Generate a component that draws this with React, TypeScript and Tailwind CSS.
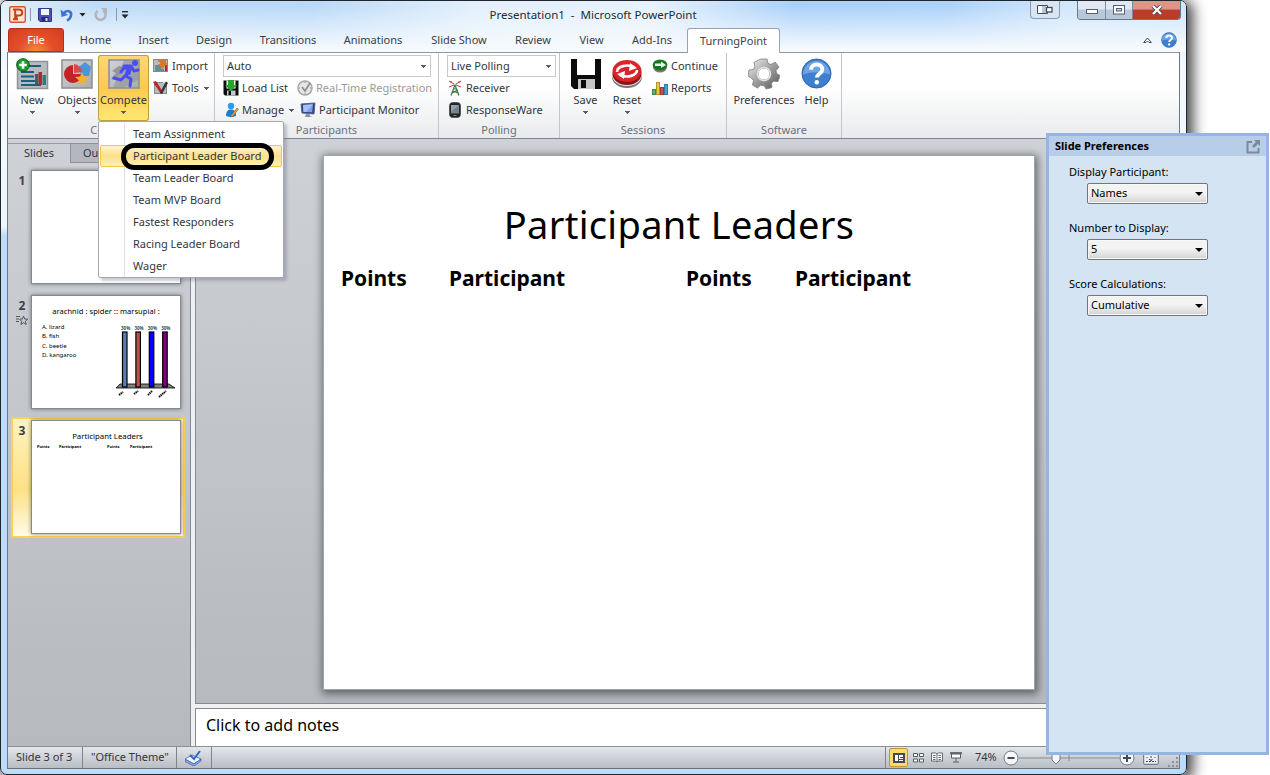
import React, { ReactNode } from "react";

type Box = { children?: ReactNode; className?: string };

function Caret({ className = "" }: { className?: string }) {
  return (
    <svg width="5" height="3" viewBox="0 0 5 3" className={className} shapeRendering="crispEdges">
      <path d="M0 0h5v1H4v1H3v1H2V2H1V1H0z" fill="#5a5e66" />
    </svg>
  );
}

function Panel32({ children }: Box) {
  return (
    <svg width="32" height="30" viewBox="0 0 32 30">
      <defs>
        <linearGradient id="plate" x1="0" y1="0" x2="1" y2="1">
          <stop offset="0" stopColor="#d0d2d4" />
          <stop offset="1" stopColor="#a9acae" />
        </linearGradient>
      </defs>
      <rect x="1" y="1" width="30" height="28" fill="url(#plate)" stroke="#8f9395" strokeWidth="1.6" />
      {children}
    </svg>
  );
}

function NewIcon() {
  return (
    <svg width="34" height="34" viewBox="0 0 34 34">
      <rect x="2.5" y="4.500" width="30" height="27" fill="#b9bcbe" stroke="#8f9395" strokeWidth="1.5" />
      <path d="M14 9h12M6 15h13M6 19.500h13M6 24h15M6 28h20" stroke="#17607f" strokeWidth="1.8" />
      <rect x="20" y="17" width="3.500" height="10" fill="#4b5f63" />
      <rect x="23.500" y="15" width="3.500" height="13" fill="#b3292b" />
      <rect x="27.500" y="18" width="3.500" height="10" fill="#2b7c86" />
      <circle cx="8" cy="8" r="6.300" fill="#1b9a2c" stroke="#0a5d18" />
      <path d="M8 4.200v7.600M4.200 8h7.600" stroke="#fff" strokeWidth="2.600" />
    </svg>
  );
}

function ObjectsIcon() {
  return (
    <Panel32>
      <path d="M18 8l6-5 6 5-2 9H20z" fill="#4f94d4" />
      <path d="M12 6a9 9 0 1 0 9 9h-9z" fill="#c32227" />
      <path d="M13 5a9 9 0 0 1 8 8l-8 1z" fill="#d9484a" />
      <path d="M21 13l2 4.500 5 .4-3.800 3.300 1.200 4.800-4.400-2.500-4.400 2.500 1.200-4.800L14 17.900l5-.4z" fill="#f2b22d" />
    </Panel32>
  );
}

function RunnerIcon() {
  return (
    <Panel32>
      <path d="M16 1h14v20L14 29H5z" fill="#8c8e93" opacity=".55" />
      <path d="M4 12l7-5 5 1-4 7-6 6-3-1 5-6z" fill="#808288" opacity=".7" />
      <circle cx="27" cy="4" r="3" fill="#4a4df5" />
      <path d="M16 7l7 0 3 5 4-1M22 8l-4 9 5 3-1 7M18 16l-5 5-7-2M22 9l-6 0-3 4" fill="none" stroke="#4a4df5" strokeWidth="3" strokeLinejoin="round" strokeLinecap="round" />
      <path d="M19 7h6l-3 9-5-1z" fill="#4a4df5" />
    </Panel32>
  );
}

function ImportIcon() {
  return (
    <svg width="16" height="16" viewBox="0 0 16 16">
      <rect x=".5" y="1.500" width="14" height="12" fill="#b8bbbd" stroke="#85898b" />
      <path d="M2 8h6M2 10h6M2 12h9" stroke="#17607f" />
      <path d="M13 7v6" stroke="#b3292b" strokeWidth="2" />
      <path d="M5 1h8v4h2l-6 6-4-5h2V4H5z" fill="#d47a28" />
    </svg>
  );
}

function ToolsIcon() {
  return (
    <svg width="16" height="16" viewBox="0 0 16 16">
      <rect x="1.500" y="2.500" width="12" height="11" fill="#b7babc" stroke="#85898b" />
      <path d="M0 2l3-1 7 11-2 2z" fill="#b9252b" />
      <path d="M13 1l2 2-6 11-2-1z" fill="#33373b" />
      <path d="M10 3l4-2" stroke="#e8eaec" />
    </svg>
  );
}

function Floppy({ size, green = false }: { size: number; green?: boolean }) {
  return (
    <svg width={size} height={size} viewBox="0 0 32 32">
      <path d="M1 1h30v30H4l-3-3z" fill="#0b0b0b" />
      <rect x="7" y="1" width="18" height="16" fill="#fff" />
      <rect x="8" y="21" width="17" height="10" fill="#c4c6c8" />
      <rect x="11" y="22" width="5" height="8" fill="#0b0b0b" />
      {green && <path d="M10 0h12v10h6L16 22 4 10h6z" fill="#25a52f" />}
    </svg>
  );
}

function ClockIcon() {
  return (
    <svg width="16" height="16" viewBox="0 0 16 16">
      <circle cx="8" cy="8" r="7" fill="#e6e6e6" stroke="#a6a6a6" strokeWidth="1.500" />
      <path d="M5 7l3 4 5-8" fill="none" stroke="#8d8d8d" strokeWidth="1.700" />
      <path d="M8 2v1M8 13v1M2 8h1M13 8h1" stroke="#8d8d8d" />
    </svg>
  );
}

function ManageIcon() {
  return (
    <svg width="14" height="16" viewBox="0 0 14 16">
      <circle cx="6" cy="4" r="3.200" fill="#2a9df0" />
      <path d="M1 14c0-5 2-6.500 5-6.500s5 1.500 5 6.500c-3 1.300-7 1.300-10 0z" fill="#1b7fd0" />
      <path d="M6 13.500L12 6l1.500 1.200-6 7.300-2 .5z" fill="#f0a13a" stroke="#7c4a12" strokeWidth=".5" />
    </svg>
  );
}

function MonitorIcon() {
  return (
    <svg width="16" height="16" viewBox="0 0 16 16">
      <path d="M1 2l14-1-1 11-12-1z" fill="#2a3e8e" stroke="#5c6478" />
      <path d="M3 3l10-.7-.8 8L3.500 10z" fill="#7f9df0" />
      <path d="M3 3l10-.7L6 10H3.500z" fill="#a8bff8" />
      <path d="M6 12l4 .5v1.500l2 1H5z" fill="#8a8f9a" />
    </svg>
  );
}

function ReceiverIcon() {
  return (
    <svg width="16" height="16" viewBox="0 0 16 16">
      <path d="M4 15.500L8 5l4 10.500M5 13l6-3M11 13L5.500 11M6.500 9l3 0" stroke="#3f7a47" strokeWidth="1.200" fill="none" />
      <path d="M7 4L2 1M7 5L2 7M9 4l5-3M9 5l5 2M4 1v2M12 1v2" stroke="#c23a3a" strokeWidth="1" />
    </svg>
  );
}

function PhoneIcon() {
  return (
    <svg width="12" height="16" viewBox="0 0 12 16">
      <rect x=".7" y=".7" width="10.600" height="14.600" rx="2.600" fill="#1f2123" stroke="#3d4042" />
      <rect x="2" y="3" width="8" height="8.500" fill="#76828e" />
      <path d="M2 3h8L2 10z" fill="#93a0ac" />
      <rect x="4.500" y="13" width="3" height="1" fill="#8a8f93" />
    </svg>
  );
}

function ResetIcon() {
  return (
    <svg width="32" height="30" viewBox="0 0 32 30">
      <ellipse cx="16" cy="18" rx="15" ry="11" fill="#73767a" />
      <ellipse cx="16" cy="16" rx="15" ry="11" fill="#e3e5e6" />
      <ellipse cx="16" cy="15" rx="14.500" ry="11" fill="#8d1216" />
      <ellipse cx="16" cy="12" rx="14.500" ry="11" fill="#d9252a" />
      <path d="M6 13c0-6 10-8 17-5M26 11c0 6-10 8-17 5" fill="none" stroke="#fff" strokeWidth="2.600" />
      <path d="M19 4l7 5-8 3zM13 20l-7-5 8-3z" fill="#fff" />
    </svg>
  );
}

function ContinueIcon() {
  return (
    <svg width="16" height="14" viewBox="0 0 16 14">
      <ellipse cx="8" cy="8" rx="7" ry="5.500" fill="#777b7e" />
      <ellipse cx="8" cy="6" rx="7.300" ry="5.500" fill="#17761f" />
      <path d="M3 4.500h6V2.500l5 3.500-5 3V7H3z" fill="#e4f4e4" />
    </svg>
  );
}

function ReportsIcon() {
  return (
    <svg width="16" height="14" viewBox="0 0 16 14">
      <rect x=".5" y="8.500" width="3" height="5" fill="#5fae6b" stroke="#3d8a4b" />
      <rect x="4.500" y="1.500" width="3" height="12" fill="#e8c93c" stroke="#b69721" />
      <rect x="8.500" y="6.500" width="3" height="7" fill="#d4504e" stroke="#a83330" />
      <rect x="12.500" y="3.500" width="3" height="10" fill="#4ba3cc" stroke="#2f7fa6" />
    </svg>
  );
}

function GearIcon() {
  return (
    <svg width="32" height="32" viewBox="0 0 32 32">
      <defs>
        <linearGradient id="gear" x1="0" y1="0" x2="1" y2="1">
          <stop offset="0" stopColor="#f2f2f2" />
          <stop offset=".5" stopColor="#a0a0a0" />
          <stop offset="1" stopColor="#555" />
        </linearGradient>
      </defs>
      <path
        fillRule="evenodd"
        d="M13 1h6l1 4.300 3 1.300L27 4l4 5-3 3.500.7 3 3.300 2-2 6-4.500-.3-2 2 .5 4.300-6 1.500-2-3.500-3.500-.2L9.500 30 4.500 27l1-4.500-2-2.500L0 18l1-6 4.300-.5 1.500-3L6 4.500 10.500 2zM16 10a6 6 0 1 0 .01 12A6 6 0 0 0 16 10z"
        fill="url(#gear)"
        stroke="#7d7d7d"
        strokeWidth=".8"
      />
      <circle cx="16" cy="16" r="6.500" fill="none" stroke="#e4e4e4" strokeWidth="1.500" />
    </svg>
  );
}

function HelpIcon({ size }: { size: number }) {
  return (
    <svg width={size} height={size} viewBox="0 0 32 32">
      <circle cx="16" cy="16" r="15" fill="#3f7fcf" stroke="#2f62a8" strokeWidth="1" />
      <path d="M2 17a14 14 0 0 1 28 0c-9-3-19-3-28 0z" fill="#6fa4e3" />
      <path d="M10.500 12c0-7 11.500-7 11.500 0 0 4-5.500 4-5.500 8" fill="none" stroke="#fff" strokeWidth="4" />
      <circle cx="16.300" cy="25" r="2.300" fill="#fff" />
    </svg>
  );
}

function BigButton({ icon, label, caret, className }: { icon: ReactNode; label: string; caret?: boolean; className: string }) {
  return (
    <div className={"flex h-[66px] shrink-0 flex-col items-center " + className}>
      <div className="flex h-[37px] items-center justify-center">{icon}</div>
      <div className="h-[16px] whitespace-nowrap leading-[16px]">{label}</div>
      {caret && <Caret className="mt-[3px]" />}
    </div>
  );
}

function SmallRow({ icon, children, className = "" }: { icon: ReactNode; children: ReactNode; className?: string }) {
  return (
    <div className={"flex h-[22px] shrink-0 items-center whitespace-nowrap " + className}>
      <div className="flex w-[19px] shrink-0 items-center">{icon}</div>
      {children}
    </div>
  );
}

function Group({ title, className, children }: { title: string; className: string; children: ReactNode }) {
  return (
    <div className={"flex h-full shrink-0 flex-col border-r border-[#c3c6ca] pt-[2px] " + className}>
      <div className="flex h-[67px]">{children}</div>
      <div className="flex h-[16px] items-center justify-center text-[#6a7080]">{title}</div>
    </div>
  );
}

function Combo({ label, className }: { label: string; className: string }) {
  return (
    <div className={"flex h-[22px] shrink-0 items-center justify-between border border-[#c6c9cd] bg-white pr-1 pl-[3px] " + className}>
      {label}
      <Caret />
    </div>
  );
}

const tabs: [string, string][] = [
  ["Home", "w-[63px]"],
  ["Insert", "w-[53px]"],
  ["Design", "w-[68px]"],
  ["Transitions", "w-[80px]"],
  ["Animations", "w-[90px]"],
  ["Slide Show", "w-[82px]"],
  ["Review", "w-[66px]"],
  ["View", "w-[51px]"],
  ["Add-Ins", "w-[70px]"],
];

function TitleBar() {
  return (
    <div className="flex h-[27px] shrink-0 items-start">
      <div className="flex h-[27px] w-[320px] items-center pl-[8px]">
        <svg width="17" height="17" viewBox="0 0 17 17">
          <rect x=".7" y=".7" width="15.600" height="15.600" rx="1.500" fill="#fbe3d6" stroke="#d4552b" strokeWidth="1.400" />
          <path d="M5 3.500h4.500c5 0 5 6 0 6H7.500V13M4 13.200h5M4 3.500h3M6.200 4v9" fill="none" stroke="#c8401b" strokeWidth="2" />
        </svg>
        <div className="ml-[4px] h-[13px] w-px bg-[#8d99a8]" />
        <svg width="14" height="14" viewBox="0 0 14 14" className="ml-[7px]">
          <path d="M.5.5h13v13H2l-1.500-1.500z" fill="#4a4fb0" stroke="#34388c" />
          <rect x="3" y="1" width="8" height="6" fill="#eef4fd" />
          <rect x="3.500" y="9" width="7" height="4.500" fill="#25286b" />
          <rect x="7.500" y="10" width="2" height="3" fill="#d6dcf4" />
        </svg>
        <svg width="14" height="14" viewBox="0 0 14 14" className="ml-[8px]">
          <path d="M3 6C7 1 12 3 11 7.500c-.4 2.500-2 4-4 5" fill="none" stroke="#3f74cc" strokeWidth="2.600" />
          <path d="M.5 1.500l1 7.500 6.500-2z" fill="#3f74cc" />
        </svg>
        <svg width="7" height="4" viewBox="0 0 7 4" className="ml-[5px]"><path d="M.5 0h6L3.500 3.500z" fill="#222" /></svg>
        <svg width="14" height="14" viewBox="0 0 14 14" className="ml-[8px]">
          <path d="M9 2.500A5 5 0 1 1 3.500 3" fill="none" stroke="#b2b6bc" strokeWidth="2.600" />
          <path d="M7 0h6v6.500z" fill="#b2b6bc" />
        </svg>
        <div className="ml-[8px] h-[13px] w-px bg-[#8d99a8]" />
        <svg width="8" height="8" viewBox="0 0 8 8" className="ml-[4px]"><path d="M1 .7h6" stroke="#222" strokeWidth="1.300" /><path d="M.5 3.500h7L4 7.500z" fill="#222" /></svg>
      </div>
      <div className="flex h-[27px] w-[544px] items-center justify-center text-[11.500px] text-[#222b36]">
        <span className="whitespace-pre">Presentation1  -  Microsoft PowerPoint</span>
      </div>
      <div className="ml-[165px] flex h-[18px] w-[30px] items-center justify-center rounded-b-[4px] border border-t-0 border-[#8b9cb1] bg-[#d7e5f5]">
        <svg width="16" height="9" viewBox="0 0 16 9">
          <path d="M.5.5h10v8H.5z" fill="#fff" stroke="#444c58" />
          <path d="M6 1v7M8 1v7" stroke="#6f8fb8" />
          <rect x="9.500" y="2.500" width="5.500" height="4.500" fill="#fff" stroke="#444c58" strokeWidth="1.300" />
        </svg>
      </div>
      <div className="ml-[17px] flex h-[19px] w-[104px] overflow-hidden rounded-b-[4px] border border-t-0 border-[#6b7685]">
        <div className="flex w-[28px] items-center justify-center border-r border-[#7f8c9d] bg-linear-to-b from-[#dfe8f3] from-45% to-[#b8c7da] to-50%">
          <svg width="12" height="6" viewBox="0 0 12 6" className="mt-[4px]"><rect x=".5" y=".5" width="11" height="4" fill="#fff" stroke="#555e6b" /></svg>
        </div>
        <div className="flex w-[27px] items-center justify-center border-r border-[#7f8c9d] bg-linear-to-b from-[#dfe8f3] from-45% to-[#b8c7da] to-50%">
          <svg width="12" height="10" viewBox="0 0 12 10"><rect x=".5" y=".5" width="11" height="8.500" fill="#fff" stroke="#555e6b" /><rect x="3.500" y="3.500" width="5" height="2.500" fill="#c9d4e2" stroke="#555e6b" /></svg>
        </div>
        <div className="flex flex-1 items-center justify-center bg-linear-to-b from-[#dd9588] from-45% to-[#bb3c28] to-50%">
          <svg width="12" height="10" viewBox="0 0 12 10"><path d="M2 1l8 8M10 1L2 9" stroke="#4f4548" strokeWidth="4" /><path d="M2 1l8 8M10 1L2 9" stroke="#fff" strokeWidth="2.300" /></svg>
        </div>
      </div>
    </div>
  );
}

function TabRow() {
  return (
    <div className="flex h-[24px] shrink-0 pl-[7px] text-[#3b3e44]">
      <div className="flex w-[56px] items-center justify-center rounded-t-[3px] border border-[#b1301a] bg-[radial-gradient(ellipse_at_50%_100%,#f68a35_0%,#e4502a_45%,#d63a1c_100%)] text-white">File</div>
      {tabs.map(([t, w]) => (
        <div key={t} className={"flex shrink-0 items-center justify-center " + w}>{t}</div>
      ))}
      <div className="z-10 -mb-px flex w-[93px] items-center justify-center rounded-t-[3px] border border-b-0 border-[#9ba3ad] bg-white">TurningPoint</div>
      <div className="flex flex-1 items-center justify-end pr-[9px]">
        <svg width="9" height="7" viewBox="0 0 9 7" className="mr-[9px]"><path d="M.7 5.500L4.500 1l3.800 4.500H6L4.500 4 3 5.500z" fill="#fff" stroke="#3f4650" /></svg>
        <HelpIcon size={16} />
      </div>
    </div>
  );
}

function Ribbon() {
  return (
    <div className="flex h-[87px] shrink-0 border-t border-b border-t-[#8f979f] border-b-[#80868f] bg-linear-to-b from-white from-40% to-[#e8eaed] text-[#33353b]">
      <Group title="Content" className="w-[207px]">
        <BigButton icon={<NewIcon />} label="New" caret className="w-[48px]" />
        <BigButton icon={<ObjectsIcon />} label="Objects" caret className="w-[42px]" />
        <BigButton icon={<RunnerIcon />} label="Compete" caret className="w-[51px] rounded-[3px] bg-linear-to-b from-[#fcd77a] via-[#fcc94e] to-[#ffe873] shadow-[inset_0_0_0_1px_#c29c41]" />
        <div className="flex flex-col pl-[4px]">
          <SmallRow icon={<ImportIcon />}>Import</SmallRow>
          <SmallRow icon={<ToolsIcon />}>Tools<Caret className="ml-[5px]" /></SmallRow>
        </div>
      </Group>
      <Group title="Participants" className="w-[224px]">
        <div className="flex flex-col pl-[8px]">
          <Combo label="Auto" className="w-[208px]" />
          <div className="flex">
            <SmallRow className="w-[74px]" icon={<Floppy size={16} green />}>Load List</SmallRow>
            <SmallRow className="text-[#9a9a9a]" icon={<ClockIcon />}>Real-Time Registration</SmallRow>
          </div>
          <div className="flex">
            <SmallRow className="w-[77px] pl-[2px] [&>div]:w-[17px]" icon={<ManageIcon />}>Manage<Caret className="ml-[5px]" /></SmallRow>
            <SmallRow icon={<MonitorIcon />}>Participant Monitor</SmallRow>
          </div>
        </div>
      </Group>
      <Group title="Polling" className="w-[121px]">
        <div className="flex flex-col pl-[8px]">
          <Combo label="Live Polling" className="w-[109px]" />
          <SmallRow icon={<ReceiverIcon />}>Receiver</SmallRow>
          <SmallRow className="pl-[2px] [&>div]:w-[17px]" icon={<PhoneIcon />}>ResponseWare</SmallRow>
        </div>
      </Group>
      <Group title="Sessions" className="w-[167px]">
        <BigButton icon={<Floppy size={32} />} label="Save" caret className="ml-[4px] w-[43px]" />
        <BigButton icon={<ResetIcon />} label="Reset" caret className="w-[40px]" />
        <div className="flex flex-col pl-[5px]">
          <SmallRow icon={<ContinueIcon />}>Continue</SmallRow>
          <SmallRow icon={<ReportsIcon />}>Reports</SmallRow>
        </div>
      </Group>
      <Group title="Software" className="w-[115px]">
        <BigButton icon={<GearIcon />} label="Preferences" className="ml-[4px] w-[66px]" />
        <BigButton icon={<HelpIcon size={31} />} label="Help" className="w-[39px]" />
      </Group>
    </div>
  );
}

const bars = ["#4f81bd", "#c0504d", "#0000ff", "#800080"];

function PollSlide() {
  return (
    <div className="flex h-full flex-col text-[7.500px] leading-none text-black">
      <div className="mt-[12px] text-center tracking-[0.05px]">arachnid : spider :: marsupial :</div>
      <div className="flex">
        <div className="flex w-[84px] flex-col gap-[3.600px] pt-[8px] pl-[10px] text-[6px]">
          <span>A. lizard</span><span>B. fish</span><span>C. beetle</span><span>D. kangaroo</span>
        </div>
        <svg width="62" height="76" viewBox="0 0 62 76" className="mt-[8px]">
          <path d="M4 60h49l6 4H0z" fill="#808080" stroke="#000" strokeWidth=".8" />
          {bars.map((c, i) => (
            <g key={c}>
              <text x={5 + i * 13.400} y="6" fontSize="4.500" fontWeight="700" fill="#28505c">30%</text>
              <rect x={6.500 + i * 13.400} y="8" width="4.500" height="55" fill={c} stroke="#000" strokeWidth="1.200" />
            </g>
          ))}
          <path d="M3 71l4-3M18 70l4-3M32 71l4-4M43 73l7-6" stroke="#111" strokeWidth="2" strokeDasharray="1.500 .6" />
        </svg>
      </div>
    </div>
  );
}

function LeaderSlide() {
  return (
    <div className="flex h-full flex-col leading-none text-black">
      <div className="mt-[12px] pl-[3px] text-center text-[7.800px]">Participant Leaders</div>
      <div className="mt-[4px] flex pl-[5px] text-[4px] font-bold">
        <span className="w-[22px]">Points</span><span className="w-[48px]">Participant</span><span className="w-[23px]">Points</span><span>Participant</span>
      </div>
    </div>
  );
}

function Thumb({ n, children, selected, star }: { n: number; children?: ReactNode; selected?: boolean; star?: boolean }) {
  return (
    <div className={"ml-[3px] flex h-[121px] w-[174px] shrink-0 rounded-[2px] border-2 pt-px " + (selected ? "border-[#f8d254] bg-[linear-gradient(180deg,#fef3c0_0%,#fde184_60%,#fffbe6_100%)]" : "border-transparent")}>
      <div className="flex w-[18px] flex-col items-center pt-[4px] text-[12px] leading-[14px] font-bold text-[#3d4048]">
        {n}
        {star && (
          <svg width="12" height="11" viewBox="0 0 12 11" className="mt-[2px]"><path d="M7.500 1l1.200 3 3 .2-2.300 2 .8 3.300-2.700-1.800-2.600 1.800.8-3.200-2-2.100 2.700-.2zM0 1.500h4M0 4h3M0 6.500h3" fill="none" stroke="#444850" strokeWidth=".9" /></svg>
        )}
      </div>
      <div className="h-[114px] w-[150px] overflow-hidden border border-[#858a92] bg-white shadow-[0_0_4px_#0007]">{children}</div>
    </div>
  );
}

function SlidePane() {
  return (
    <div className="flex w-[183px] shrink-0 flex-col border-r border-[#858b94] bg-linear-to-b from-[#ced2d7] to-[#b6babf]">
      <div className="flex h-[24px] pt-[4px] text-[#33363c]">
        <div className="flex w-[62px] items-center justify-center border-t border-[#989da5]">Slides</div>
        <div className="flex flex-1 items-center border border-[#8c9199] bg-[#b4b8be] pl-[12px]">Outline</div>
      </div>
      <div className="flex flex-col gap-[4px] pt-[4px]">
        <Thumb n={1} />
        <Thumb n={2} star><PollSlide /></Thumb>
        <Thumb n={3} selected><LeaderSlide /></Thumb>
      </div>
    </div>
  );
}

function Editor() {
  return (
    <div className="flex min-w-0 flex-1 flex-col border-l-4 border-[#eef0f2]">
      <div className="flex h-[565px] border-b border-l border-[#858b94] bg-linear-to-b from-[#ced2d7] to-[#b6babf] pt-[16px] pl-[127px]">
        <div className="flex h-[535px] w-[712px] flex-col border border-[#a0a5ac] bg-white text-black shadow-[1px_2px_8px_2px_#0007]">
          <div className="mt-[43px] flex h-[50px] items-center justify-center text-[38px] leading-none tracking-[0.3px]">
            <span className="whitespace-nowrap">Participant Leaders</span>
          </div>
          <div className="mt-[16px] flex pl-[17px] text-[21px] leading-[26px] font-bold">
            <span className="w-[108px]">Points</span><span className="w-[237px]">Participant</span><span className="w-[109px]">Points</span><span>Participant</span>
          </div>
        </div>
      </div>
      <div className="h-[4px] bg-[#eef0f2]" />
      <div className="flex flex-1 items-start border-t border-l border-[#858b94] bg-white pt-[4px] pl-[10px] text-[16px] leading-[24px] text-black">Click to add notes</div>
    </div>
  );
}

function StatusBar() {
  return (
    <div className="flex h-[23px] shrink-0 items-center border-t border-b border-t-[#8b9097] border-b-[#6d737c] bg-linear-to-b from-[#e3e6ea] to-[#b9bdc4] text-[#33363c]">
      <div className="flex h-full w-[75px] items-center border-r border-[#7f848c] pl-[8px]">Slide 3 of 3</div>
      <div className="flex h-full w-[94px] items-center border-r border-[#7f848c] pl-[8px]">"Office Theme"</div>
      <div className="flex h-full w-[35px] items-center border-r border-[#7f848c] pl-[8px]">
        <svg width="17" height="16" viewBox="0 0 17 16">
          <path d="M0 9l7-4 9 4-7 5z" fill="#eef3fb" stroke="#5b7fc7" />
          <path d="M0 9.500v2l9 4.500 7-5V9l-7 5z" fill="#96b2e4" stroke="#3f63b0" strokeWidth=".8" />
          <path d="M5 5l4 4 6-8" fill="none" stroke="#3568c4" strokeWidth="2" />
        </svg>
      </div>
      <div className="flex h-full flex-1 items-center border-l border-[#7f848c] pl-[3px] ml-[673px]">
        <div className="flex h-[19px] w-[19px] items-center justify-center rounded-[2px] border border-[#c2953c] bg-[#fddb6b]">
          <svg width="12" height="10" viewBox="0 0 12 10" shapeRendering="crispEdges"><path d="M1 1h10v8H1z" fill="#fff" stroke="#444a55" strokeWidth="1.500" /><path d="M5 1v8M5 6h6M7 4h3" stroke="#444a55" /></svg>
        </div>
        <svg width="11" height="10" viewBox="0 0 11 10" className="ml-[5px]"><path d="M.5.500h4v3h-4zM6.500.5h4v3h-4zM.5 6h4v3h-4zM6.500 6h4v3h-4z" fill="#fff" stroke="#555b66" /></svg>
        <svg width="12" height="11" viewBox="0 0 12 11" className="ml-[7px]"><path d="M.5 1h4L6 2l1.500-1h4v8h-4L6 10 4.500 9h-4zM6 2v8M2 3.500h2.500M2 5.500h2.500M2 7.500h2.500M7.500 3.500H10M7.500 5.500H10M7.500 7.500H10" fill="#fff" stroke="#555b66" strokeWidth=".9" /></svg>
        <svg width="12" height="11" viewBox="0 0 12 11" className="ml-[7px]"><path d="M0 1h12" stroke="#444a55" strokeWidth="1.500" /><path d="M1.500 2h9v4h-9zM6 6v3.500M3 10h6" fill="#fff" stroke="#555b66" /></svg>
        <span className="ml-[13px] w-[28px]">74%</span>
        <svg width="16" height="16" viewBox="0 0 16 16"><circle cx="8" cy="8" r="7" fill="#f5f6f8" stroke="#757a84" /><path d="M4.500 8h7" stroke="#444a55" strokeWidth="2" /></svg>
        <svg width="100" height="16" viewBox="0 0 100 16"><path d="M0 8h100M50 5v6" stroke="#858a94" /><path d="M33 3h8v7l-4 4-4-4z" fill="#f5f6f8" stroke="#757a84" /></svg>
        <svg width="16" height="16" viewBox="0 0 16 16"><circle cx="8" cy="8" r="7" fill="#f5f6f8" stroke="#757a84" /><path d="M4 8h8M8 4v8" stroke="#444a55" strokeWidth="2" /></svg>
        <svg width="16" height="15" viewBox="0 0 16 15" className="ml-[8px]"><rect x=".7" y=".7" width="14.600" height="13.600" rx="1" fill="#eceef1" stroke="#656b75" /><path d="M8 3v8M6 9l2 2 2-2M4 7v1M12 7v1M3 11.500h10" stroke="#444a55" fill="none" strokeDasharray="2 1" /></svg>
        <svg width="11" height="11" viewBox="0 0 11 11" className="mt-[9px] ml-[9px]"><path d="M8 0h2v2H8zM4 4h2v2H4zM8 4h2v2H8zM0 8h2v2H0zM4 8h2v2H4zM8 8h2v2H8z" fill="#8c919a" /></svg>
      </div>
    </div>
  );
}

const menuItems = ["Team Assignment", "Participant Leader Board", "Team Leader Board", "Team MVP Board", "Fastest Responders", "Racing Leader Board", "Wager"];

function CompeteMenu() {
  return (
    <div className="absolute top-[121px] left-[98px] h-[157px] w-[186px] rounded-[2px] border border-[#a4a7ad] bg-[linear-gradient(90deg,#fff_25px,#dfe1e4_25px,#dfe1e4_26px,#fff_26px)] p-px text-[#33353b] shadow-[3px_3px_3px_#62637e55]">
      {menuItems.map((m) => (
        <div
          key={m}
          className={
            "relative flex h-[22px] items-center whitespace-nowrap rounded-[2px] border pl-[32px] " +
            (m === "Participant Leader Board" ? "border-[#f0c64a] bg-linear-to-b from-[#fdf3cf] via-[#fbe08a] to-[#fef0b5]" : "border-transparent")
          }
        >
          {m}
          {m === "Participant Leader Board" && <div className="absolute -top-[3px] left-[20px] h-[27px] w-[153px] rounded-[13px] border-[5px] border-black" />}
        </div>
      ))}
    </div>
  );
}

function Field({ label, value }: { label: string; value: string }) {
  return (
    <div className="flex h-[56px] flex-col pl-[20px]">
      <div className="h-[16px] leading-[16px]">{label}</div>
      <div className="mt-[3px] ml-[18px] flex h-[21px] w-[121px] items-center justify-between rounded-[2px] border border-[#70767c] bg-linear-to-b from-[#f3f3f3] from-45% to-[#d3d3d3] pr-[4px] pl-[3px] shadow-[inset_0_0_0_1px_#f8f8f8]">
        {value}
        <svg width="8" height="4" viewBox="0 0 8 4"><path d="M0 0h8L4 4z" fill="#000" /></svg>
      </div>
    </div>
  );
}

function Preferences() {
  return (
    <div className="absolute top-[133px] left-[1046px] flex h-[622px] w-[223px] flex-col border-[3px] border-[#95b5e3] bg-[#d4e4f3] text-black">
      <div className="flex h-[20px] items-center justify-between bg-[#b7cde8] pr-[5px] pl-[6px] font-bold">
        Slide Preferences
        <svg width="15" height="15" viewBox="0 0 15 15"><path d="M6 3H1.500v10.500h11V9" fill="none" stroke="#7e8a99" strokeWidth="2" /><path d="M8 1h6v6l-2-2-4 4-2-2 4-4z" fill="#7e8a99" /></svg>
      </div>
      <div className="flex flex-col pt-[8px]">
        <Field label="Display Participant:" value="Names" />
        <Field label="Number to Display:" value="5" />
        <Field label="Score Calculations:" value="Cumulative" />
      </div>
    </div>
  );
}

export default function App() {
  return (
    <div className="relative flex h-[775px] w-[1270px] overflow-hidden bg-white font-['Noto_Sans','Open_Sans',sans-serif] text-[11px]">
      <div className="flex h-[775px] w-[1187px] flex-col rounded-[7px] border border-[#20242b] bg-[linear-gradient(180deg,#e2effc_0px,#eaf4fd_50px,#f3f9fe_70px,#eef6fe_225px,#bcdcfb_235px,#bcdcfb_100%)] shadow-[3px_3px_14px_3px_#000b]">
        <div className="flex h-[51px] shrink-0 flex-col rounded-t-[6px] bg-[linear-gradient(180deg,#fff0_10%,#f6fafd_95%),linear-gradient(90deg,#e1effb_0%,#bfdcf8_8%,#b9d9f8_26%,#e3f0fc_40%,#e6f2fc_55%,#abd1fa_67%,#aed3fa_80%,#d2e7fc_90%,#cfe6fe_100%)]">
          <TitleBar />
          <TabRow />
        </div>
        <div className="mx-[6px] flex h-[717px] flex-col border-r border-l border-[#707883]">
          <Ribbon />
          <div className="flex h-[607px] shrink-0">
            <SlidePane />
            <Editor />
          </div>
          <StatusBar />
        </div>
      </div>
      <CompeteMenu />
      <Preferences />
    </div>
  );
}
